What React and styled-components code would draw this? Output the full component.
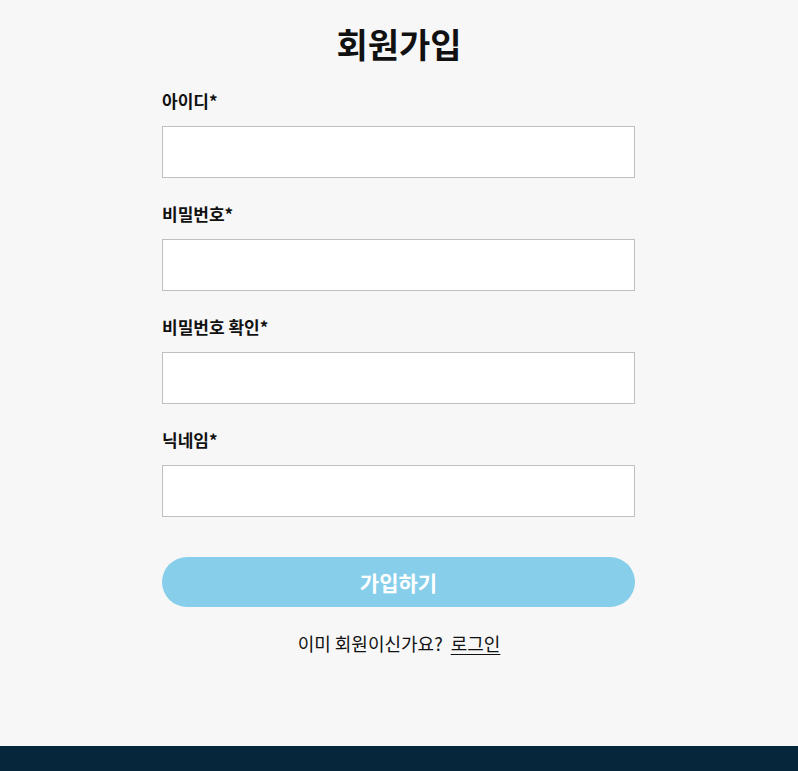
import React from 'react';
import styled, { createGlobalStyle } from 'styled-components';

const GlobalStyle = createGlobalStyle`
  * { box-sizing: border-box; }
  body {
    margin: 0;
    background: #f7f7f7;
    font-family: 'Noto Sans CJK KR', 'Noto Sans', sans-serif;
    color: #111;
  }
`;

const Page = styled.div`
  min-height: 100vh;
  display: flex;
  flex-direction: column;
`;

const Main = styled.main`
  flex: 1;
  display: flex;
  flex-direction: column;
  align-items: center;
  padding: 20px 0 91px;
`;

const Title = styled.h1`
  margin: 0 0 21px;
  font-size: 34px;
  line-height: 48px;
  font-weight: 700;
`;

const Form = styled.form`
  width: 473px;
  margin-right: 1px;
  display: flex;
  flex-direction: column;
  gap: 24px;
`;

const Field = styled.div`
  display: flex;
  flex-direction: column;
`;

const Label = styled.label`
  font-size: 17px;
  line-height: 24px;
  font-weight: 700;
  margin-bottom: 13px;
`;

const Input = styled.input`
  height: 52px;
  width: 100%;
  border: 1px solid #bfbfbf;
  background: #fff;
  padding: 0 14px;
  font-size: 16px;
  font-family: inherit;
  outline: none;
`;

const SubmitButton = styled.button`
  margin-top: 16px;
  height: 50px;
  border: none;
  border-radius: 25px;
  background: #87ceeb;
  color: #fff;
  font-family: inherit;
  font-size: 21px;
  font-weight: 700;
  cursor: pointer;
`;

const LoginPrompt = styled.p`
  margin: 24px 0 0;
  font-size: 18px;
  line-height: 24px;
  text-align: center;
`;

const LoginLink = styled.a`
  margin-left: 8px;
  color: #111;
  text-decoration: underline;
  text-underline-offset: 3px;
`;

const Footer = styled.footer`
  height: 120px;
  background: #06273b;
`;

const fields = [
  { id: 'username', label: '아이디*', type: 'text' },
  { id: 'password', label: '비밀번호*', type: 'password' },
  { id: 'passwordConfirm', label: '비밀번호 확인*', type: 'password' },
  { id: 'nickname', label: '닉네임*', type: 'text' },
];

export default function App() {
  return (
    <Page>
      <GlobalStyle />
      <Main>
        <Title>회원가입</Title>
        <Form onSubmit={e => e.preventDefault()}>
          {fields.map(f => (
            <Field key={f.id}>
              <Label htmlFor={f.id}>{f.label}</Label>
              <Input id={f.id} type={f.type} />
            </Field>
          ))}
          <SubmitButton type="submit">가입하기</SubmitButton>
        </Form>
        <LoginPrompt>
          이미 회원이신가요?
          <LoginLink href="#">로그인</LoginLink>
        </LoginPrompt>
      </Main>
      <Footer />
    </Page>
  );
}
